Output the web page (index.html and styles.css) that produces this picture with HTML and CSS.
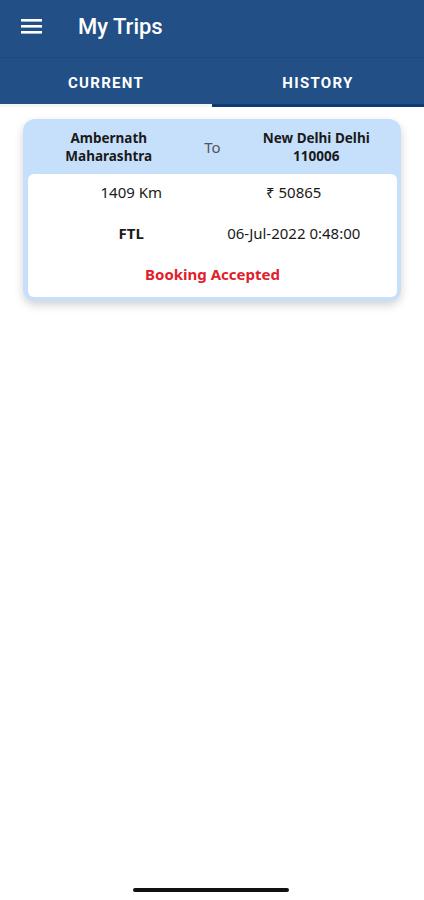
FILE: index.html
```html
<!DOCTYPE html>
<html lang="en">
<head>
    <meta charset="UTF-8">
    <meta name="viewport" content="width=device-width, initial-scale=1.0">
    <title>My Trips</title>
    <link rel="stylesheet" href="styles.css">
</head>
<body>
    <div class="app">
        <!-- Top bar -->
        <div class="toolbar">
            <svg class="menu" width="22" height="16" viewBox="0 0 22 16">
                <rect x="0" y="1" width="21" height="2.6" fill="#fff"/>
                <rect x="0" y="7" width="21" height="2.6" fill="#fff"/>
                <rect x="0" y="13" width="21" height="2.6" fill="#fff"/>
            </svg>
            <div class="title">My Trips</div>
        </div>

        <!-- Tabs -->
        <div class="tabs">
            <div class="tab active">CURRENT</div>
            <div class="tab">HISTORY</div>
        </div>

        <div class="list">
            <div class="trip-card">
                <div class="route">
                    <div class="place">Ambernath<br>Maharashtra</div>
                    <div class="to">To</div>
                    <div class="place">New Delhi Delhi<br>110006</div>
                </div>
                <div class="details">
                    <div class="row">
                        <div class="cell">1409 Km</div>
                        <div class="cell">&#8377; 50865</div>
                    </div>
                    <div class="row">
                        <div class="cell bold">FTL</div>
                        <div class="cell">06-Jul-2022 0:48:00</div>
                    </div>
                    <div class="status">Booking Accepted</div>
                </div>
            </div>
        </div>

        <div class="home-bar"></div>
    </div>
</body>
</html>
```

FILE: styles.css
```css
body {
    margin: 0;
    padding: 0;
    background: #fff;
    font-family: Roboto, "Noto Sans", sans-serif;
}
.app {
    width: 424px;
    height: 900px;
    display: flex;
    flex-direction: column;
    position: relative;
}
.toolbar {
    height: 57px;
    background: #214f86;
    display: flex;
    align-items: center;
    padding-left: 21px;
    border-bottom: 1px solid #1d4a80;
}
.menu {
    display: block;
    margin-top: -6px;
}
.title {
    color: #fff;
    font-size: 22px;
    font-weight: 500;
    margin-left: 35px;
    margin-top: -4px;
}
.tabs {
    display: flex;
    background: #214f86;
    height: 49px;
}
.tab {
    flex: 1;
    color: #fff;
    font-size: 15px;
    font-weight: 700;
    letter-spacing: 1.3px;
    text-align: center;
    padding-top: 16px;
    box-sizing: border-box;
    border-bottom: 3px solid #0f3a78;
}
.tab.active {
    border-bottom: 3px solid #f2f5f8;
}
.list {
    padding: 12px 23px 0 23px;
}
.trip-card {
    background: #c6e0fb;
    border-radius: 12px;
    padding: 0 4px 4px 5px;
    box-shadow: 0 4px 10px rgba(0, 0, 0, 0.18);
    font-family: "Noto Sans", sans-serif;
}
.route {
    display: flex;
    align-items: center;
    height: 54px;
    padding-top: 1px;
}
.place {
    flex: 1;
    text-align: center;
    font-size: 13.5px;
    font-weight: 700;
    line-height: 18.5px;
    color: #1a1a1a;
}
.to {
    width: 46px;
    text-align: center;
    font-size: 15px;
    color: #555;
}
.details {
    background: #fff;
    border-radius: 6px;
    padding: 7px 22px 8px 22px;
}
.row {
    display: flex;
    height: 41px;
}
.cell {
    flex: 1;
    text-align: center;
    font-size: 15px;
    color: #1a1a1a;
    line-height: 22px;
}
.bold {
    font-weight: 700;
}
.status {
    text-align: center;
    color: #e0202a;
    font-size: 15px;
    font-weight: 700;
    line-height: 22px;
    padding-bottom: 4px;
}
.home-bar {
    position: absolute;
    left: 133px;
    bottom: 8px;
    width: 156px;
    height: 4px;
    border-radius: 2px;
    background: #111;
}
```
